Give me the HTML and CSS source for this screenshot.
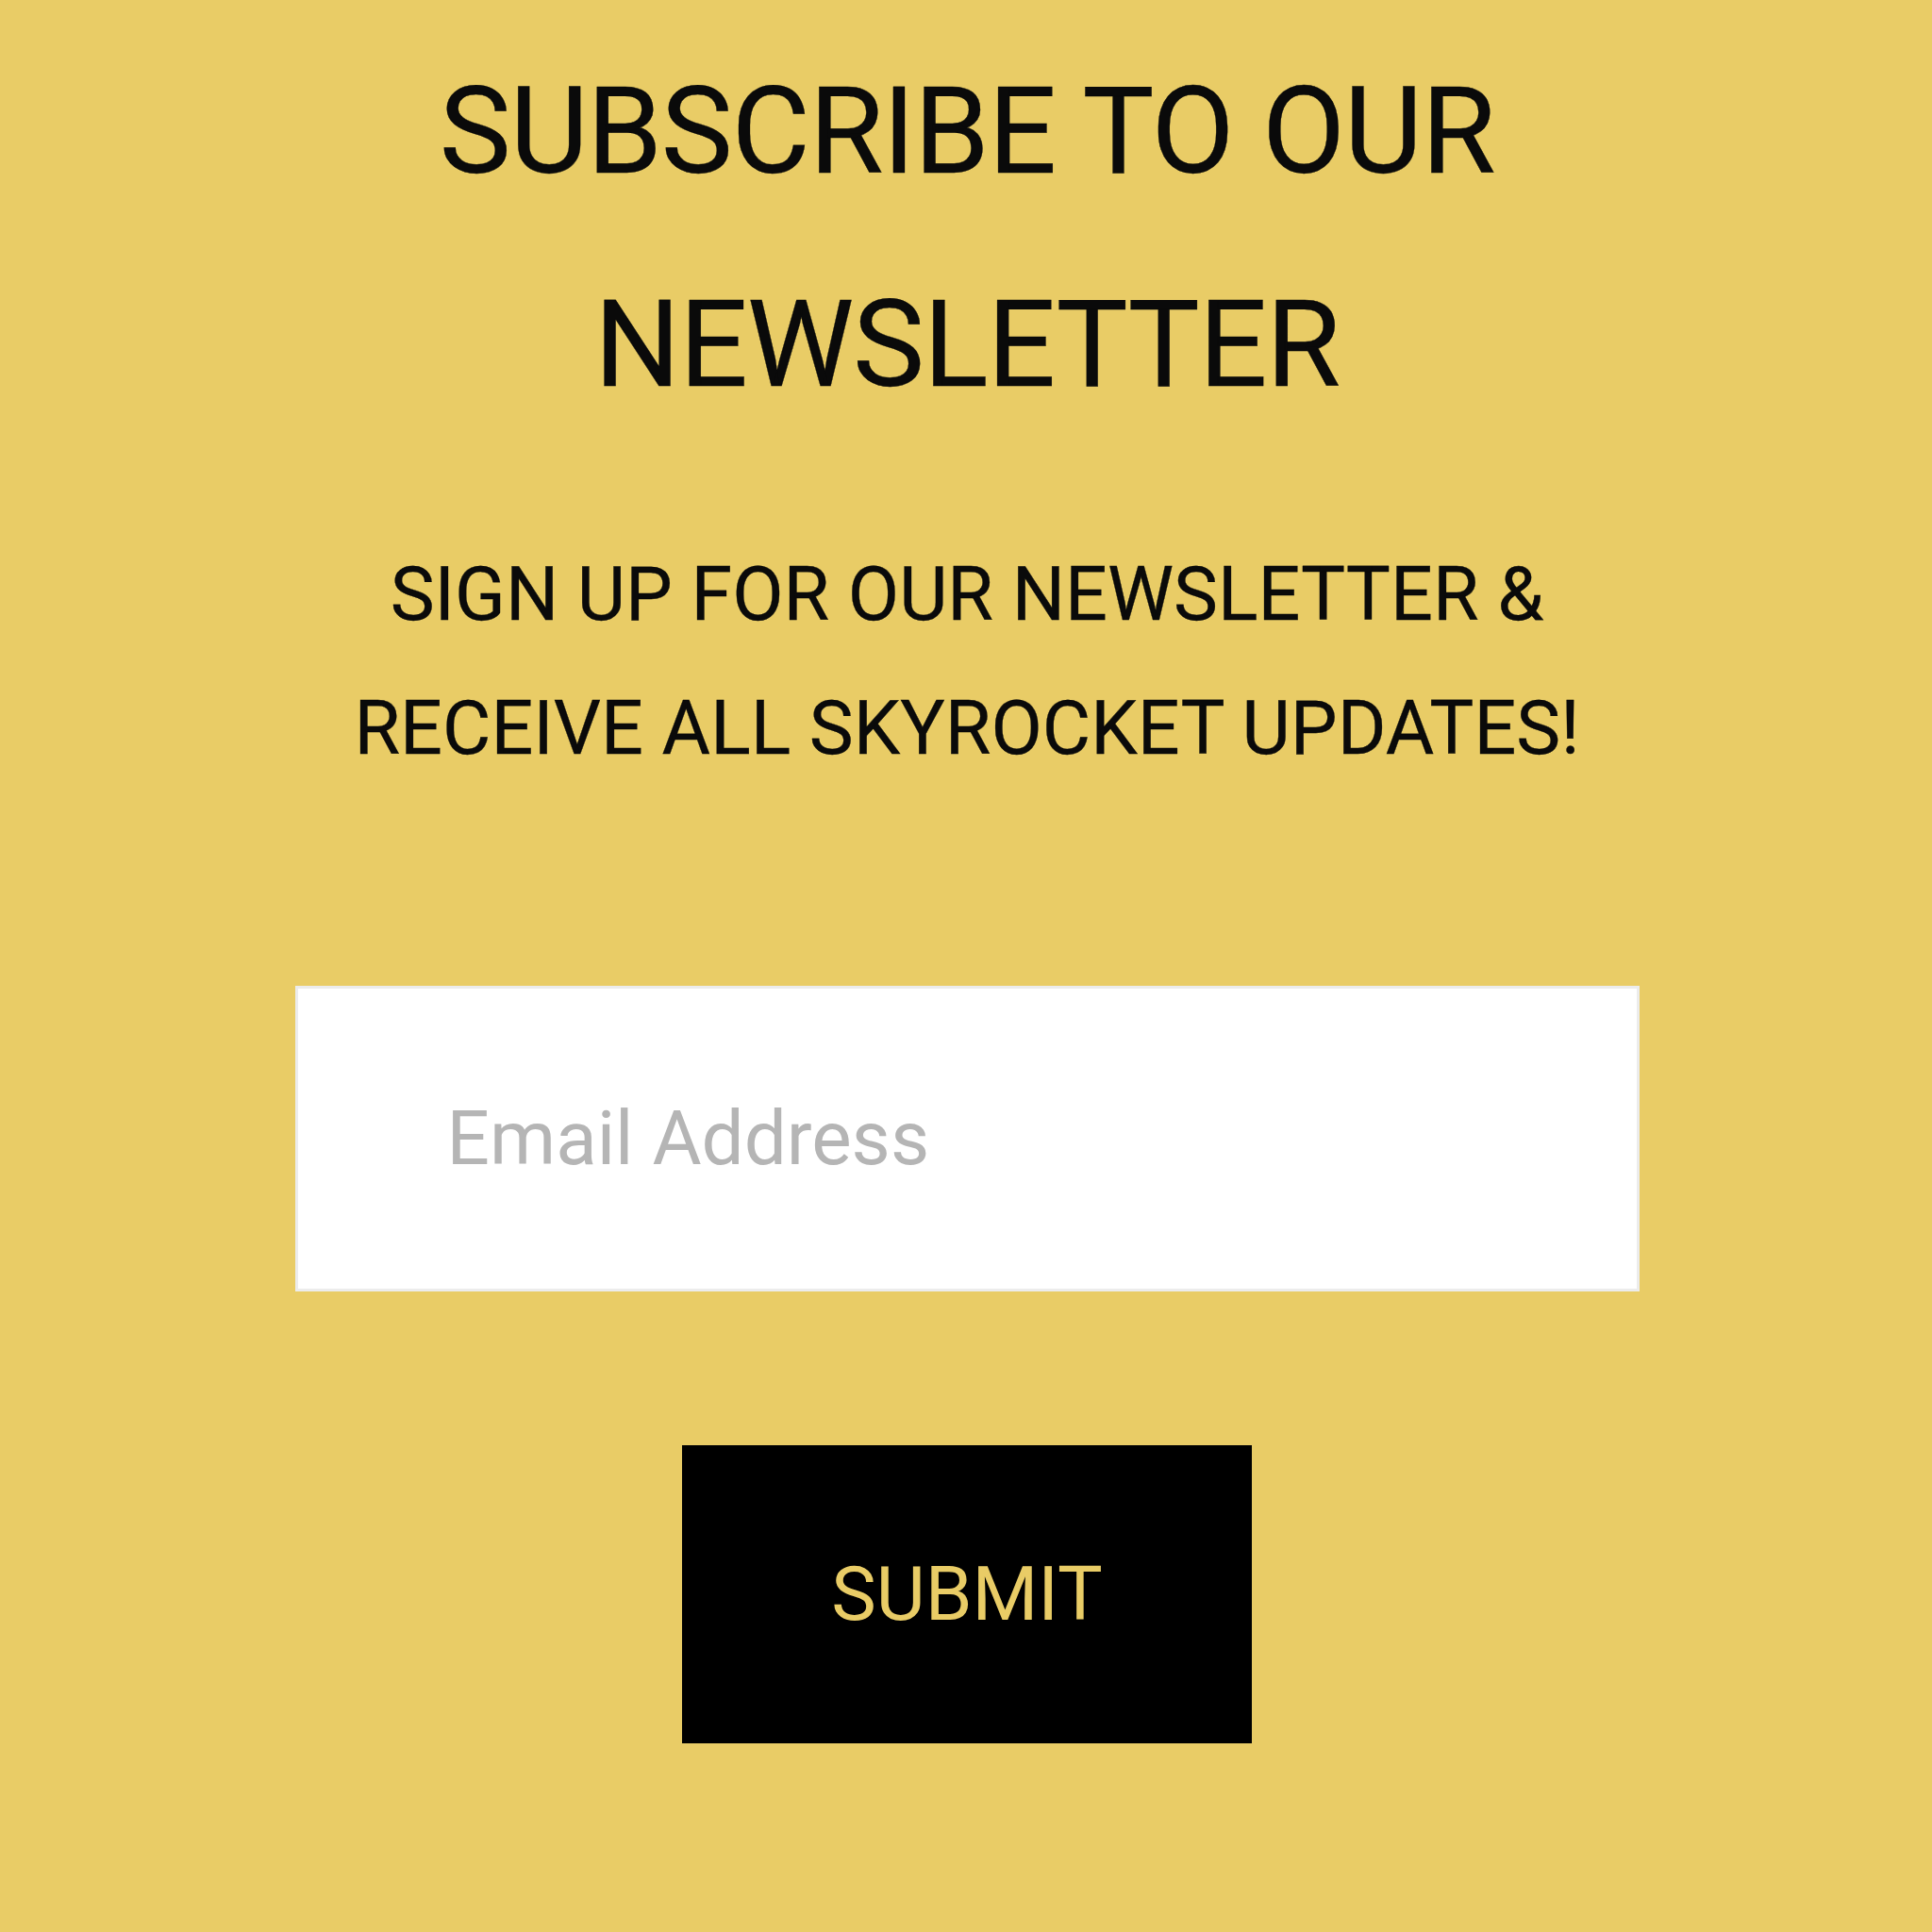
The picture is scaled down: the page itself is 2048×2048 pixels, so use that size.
FILE: index.html
```html
<!DOCTYPE html>
<html lang="en">
<head>
<meta charset="utf-8">
<title>Newsletter</title>
<link rel="stylesheet" href="styles.css">
</head>
<body>
<section class="newsletter">
  <h2 class="newsletter__title">SUBSCRIBE TO OUR NEWSLETTER</h2>
  <p class="newsletter__lead">SIGN UP FOR OUR NEWSLETTER &amp; RECEIVE ALL SKYROCKET UPDATES!</p>
  <form class="newsletter__form" onsubmit="return false;">
    <input class="newsletter__input" type="email" placeholder="Email Address">
    <button class="newsletter__submit" type="submit">SUBMIT</button>
  </form>
</section>
</body>
</html>
```

FILE: styles.css
```css
html, body {
  margin: 0;
  padding: 0;
  background: #e9cc66;
}

body {
  min-height: 2048px;
  font-family: Roboto, "Liberation Sans", Arial, sans-serif;
  color: #0a0a0a;
}

.newsletter {
  display: flex;
  flex-direction: column;
  align-items: center;
  padding: 26px 0 0 2px;
  text-align: center;
}

.newsletter__title {
  margin: 0;
  max-width: 1440px;
  font-size: 128px;
  font-weight: 400;
  line-height: 226px;
  letter-spacing: -1.2px;
  -webkit-text-stroke: 0.3px #0a0a0a;
}

.newsletter__lead {
  margin: 81px 0 0;
  max-width: 1440px;
  font-size: 79px;
  font-weight: 400;
  line-height: 142px;
  -webkit-text-stroke: 0.3px #0a0a0a;
}

.newsletter__form {
  display: flex;
  flex-direction: column;
  align-items: center;
  margin-top: 202px;
}

.newsletter__input {
  box-sizing: border-box;
  width: 1425px;
  height: 324px;
  padding: 0 0 0 158px;
  border: 3px solid #ececec;
  border-radius: 0;
  background: #ffffff;
  font-family: Roboto, "Liberation Sans", Arial, sans-serif;
  font-size: 80px;
  color: #222;
  outline: none;
}

.newsletter__input::placeholder {
  color: #b5b5b5;
  opacity: 1;
}

.newsletter__submit {
  box-sizing: border-box;
  width: 604px;
  height: 316px;
  margin-top: 163px;
  padding: 0;
  border: none;
  border-radius: 0;
  background: #000000;
  color: #e9cc66;
  font-family: Roboto, "Liberation Sans", Arial, sans-serif;
  font-size: 80px;
  font-weight: 400;
  cursor: pointer;
}
```
